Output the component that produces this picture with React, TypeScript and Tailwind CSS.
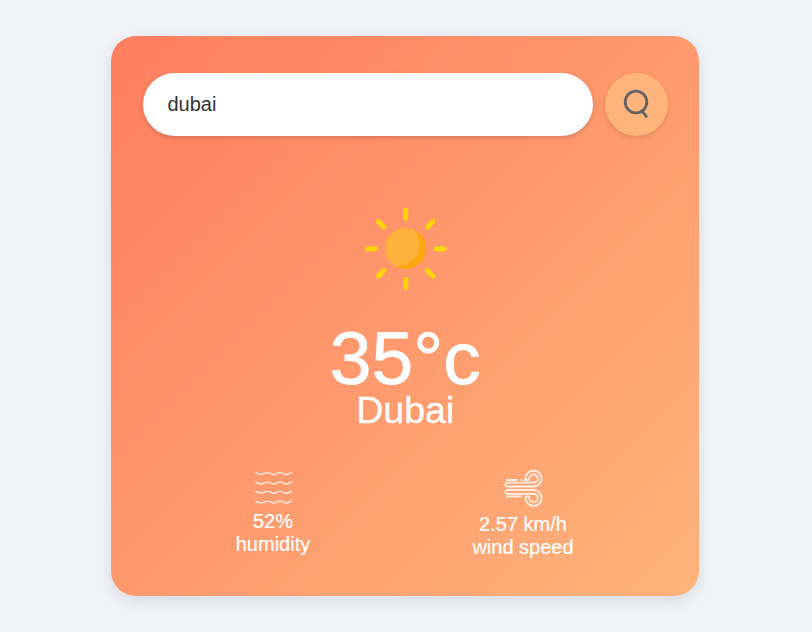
import React from "react";

const RAYS = [0, 45, 90, 135, 180, 225, 270, 315];

function SearchIcon() {
  return (
    <svg width="27" height="31" viewBox="0 0 27 31" fill="none" stroke="#636363">
      <circle cx="13" cy="13" r="10.8" strokeWidth="2.8" />
      <path d="M18.6 21.4 L24 28.4" strokeWidth="2.8" />
    </svg>
  );
}

function SunIcon() {
  return (
    <svg width="100" height="100" viewBox="0 0 100 100">
      <defs>
        <clipPath id="sun-disc">
          <circle cx="49.7" cy="49.5" r="20.6" />
        </clipPath>
      </defs>
      <g transform="translate(-0.3 -0.2)">
        {RAYS.map((angle) => (
          <path
            key={angle}
            d="M50 11.6 V19.2"
            stroke="#ffd40a"
            strokeWidth="5.2"
            strokeLinecap="round"
            transform={`rotate(${angle} 50 50)`}
          />
        ))}
      </g>
      <circle cx="49.7" cy="49.5" r="20.6" fill="#ffa50f" />
      <circle cx="41.6" cy="45.3" r="21.9" fill="#ffb33c" clipPath="url(#sun-disc)" />
    </svg>
  );
}

function HumidityIcon() {
  return (
    <svg className="overflow-visible" width="38" height="38" viewBox="-1 0 38 38" fill="none" stroke="#fff" strokeWidth="1.4" strokeOpacity=".78">
      {[4.5, 14, 23.3, 33].map((y) => (
        <path
          key={y}
          d={`M0 ${y - 0.8} C3 ${y - 0.8} 3.5 ${y + 1} 6.2 ${y + 1} S9.5 ${y - 0.9} 12.5 ${y - 0.9} S16 ${y + 1} 18.8 ${y + 1} S22 ${y - 0.9} 25 ${y - 0.9} S28.5 ${y + 1} 31.3 ${y + 1} S34.5 ${y - 0.8} 37.2 ${y - 0.8}`}
        />
      ))}
    </svg>
  );
}

function WindIcon() {
  return (
    <svg className="overflow-visible" width="38" height="38" viewBox="-0.8 0 38 38" fill="none" stroke="#fff" strokeWidth="1.8" strokeOpacity=".83" strokeLinecap="round">
      <path d="M2.5 17.5 H28.8 A8 8 0 1 0 20.8 9.5 A1.9 1.9 0 0 0 24.6 9.5 A4.2 4.2 0 1 1 28.8 13.7 H2.5 A1.9 1.9 0 0 0 2.5 17.5 Z" />
      <path d="M2.5 21 H28.8 A8 8 0 1 1 20.8 29 A1.9 1.9 0 0 1 24.6 29 A4.2 4.2 0 1 0 28.8 24.8 H2.5 A1.9 1.9 0 0 1 2.5 21 Z" />
      <path d="M2 11 H12.2 M16.3 11 H16.4 M19.6 11 H21 M2 27.4 H16.5" />
    </svg>
  );
}

export default function App() {
  return (
    <div className="h-[632px] w-full bg-[#f0f4f8] pt-9 pl-[111px] font-['Liberation_Sans',Arial,sans-serif]">
      <main className="flex h-[560px] w-[588px] flex-col rounded-[25px] bg-[linear-gradient(135deg,#ff7e5f,#feb47b)] pr-[31px] pl-8 pt-[37px] text-white shadow-[0_5px_15px_rgba(0,0,0,0.1)]">
        <div className="flex gap-3">
          <input
            aria-label="City"
            defaultValue="dubai"
            spellCheck={false}
            className="h-[63px] w-[450px] rounded-full bg-white px-[24.5px] text-[20px] text-[#333] shadow-[0_2px_5px_rgba(0,0,0,0.15)] outline-none"
          />
          <button
            aria-label="Search"
            className="flex size-[63px] items-center justify-center rounded-full bg-[#feb47b] shadow-[0_2px_5px_rgba(0,0,0,0.12)]"
          >
            <SearchIcon />
          </button>
        </div>
        <section className="flex flex-col items-center pt-[63px] pl-px">
          <SunIcon />
          <h1 className="mt-[22px] pr-[1.5px] text-[75px] leading-[75px] [-webkit-text-stroke:0.8px_white]">35°c</h1>
          <h2 className="pr-[1.5px] text-[37.5px] leading-[28px] [-webkit-text-stroke:0.3px_white]">Dubai</h2>
        </section>
        <section className="mt-[45px] flex text-center text-[20px] leading-[23px] [-webkit-text-stroke:0.2px_white]">
          <div className="ml-[82px] flex w-[96px] flex-col items-center">
            <HumidityIcon />
            <p className="mt-[3px]">52%</p>
            <p>humidity</p>
          </div>
          <div className="ml-[142px] flex w-[120px] flex-col items-center">
            <WindIcon />
            <p className="mt-1.5">2.57 km/h</p>
            <p>wind speed</p>
          </div>
        </section>
      </main>
    </div>
  );
}
